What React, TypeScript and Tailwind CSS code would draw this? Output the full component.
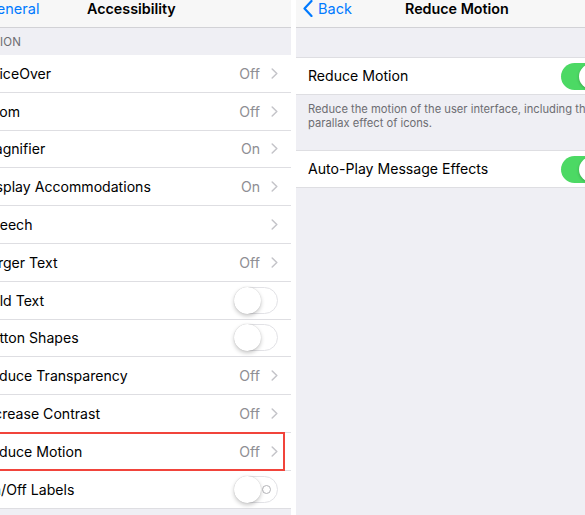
import React from "react";

const FONT = { fontFamily: "Inter, 'Noto Sans', 'Liberation Sans', sans-serif" };

function Chevron() {
  return (
    <svg width="7" height="11" viewBox="0 0 7 11" className="shrink-0">
      <polyline points="1.2,1 5.8,5.5 1.2,10" fill="none" stroke="#c4c4c9" strokeWidth="1.5" strokeLinecap="round" strokeLinejoin="round" />
    </svg>
  );
}

function Toggle({ on, labels }: { on?: boolean; labels?: boolean }) {
  if (on) {
    return (
      <div className="relative w-[44px] h-[27px] rounded-full bg-[#4cd964] shrink-0">
        <div className="absolute top-[1px] right-[1px] w-[25px] h-[25px] rounded-full bg-white shadow-[0_1px_3px_rgba(0,0,0,0.25)]" />
      </div>
    );
  }
  return (
    <div className="relative w-[44px] h-[27px] rounded-full border border-[#e2e2e6] bg-white shrink-0">
      {labels && (
        <div className="absolute top-[8px] right-[6px] w-[9px] h-[9px] rounded-full border border-[#b4b4b8]" />
      )}
      <div className="absolute top-[-1px] left-[-1px] w-[27px] h-[27px] rounded-full bg-white shadow-[0_2px_4px_rgba(0,0,0,0.22),0_0_1px_rgba(0,0,0,0.2)]" />
    </div>
  );
}

type Row = { label: string; value?: string; chevron?: boolean; toggle?: boolean; labels?: boolean; highlight?: boolean };

const rows: Row[] = [
  { label: "VoiceOver", value: "Off", chevron: true },
  { label: "Zoom", value: "Off", chevron: true },
  { label: "Magnifier", value: "On", chevron: true },
  { label: "Display Accommodations", value: "On", chevron: true },
  { label: "Speech", chevron: true },
  { label: "Larger Text", value: "Off", chevron: true },
  { label: "Bold Text", toggle: true },
  { label: "Button Shapes", toggle: true },
  { label: "Reduce Transparency", value: "Off", chevron: true },
  { label: "Increase Contrast", value: "Off", chevron: true },
  { label: "Reduce Motion", value: "Off", chevron: true, highlight: true },
  { label: "On/Off Labels", toggle: true, labels: true },
];

function LeftPanel() {
  return (
    <div className="w-[291px] h-[515px] overflow-hidden bg-[#efeff4] shrink-0">
      <div className="w-[322px] ml-[-31px]">
        <div className="h-[28px] bg-[#f7f7f7] border-b border-[#d2d2d6] flex items-start">
          <div className="w-[100px] flex items-start pl-[17px] text-[14.5px] leading-[18px] text-[#007aff]">
            <span>General</span>
          </div>
          <div className="ml-[18px] text-[14.3px] leading-[18px] font-semibold text-black">Accessibility</div>
        </div>
        <div className="h-[27px] flex items-center pt-[3px] pl-[12px] text-[11.5px] text-[#6d6d72] tracking-[0.2px]">VISION</div>
        <div className="bg-white">
          {rows.map((r, i) => (
            <div key={i} className="relative h-[37.8px] flex items-center pl-[13px] pr-[13px] border-b border-[#dedee2]">
              <span className="flex-1 text-[14.1px] text-black">{r.label}</span>
              {r.value && <span className="text-[14.1px] text-[#8e8e93] mr-[11px]">{r.value}</span>}
              {r.chevron && <Chevron />}
              {r.toggle && <Toggle labels={r.labels} />}
              {r.highlight && (
                <div className="absolute top-[-1px] bottom-[-1px] left-[20px] right-[6px] border-2 border-[#f1443b]" />
              )}
            </div>
          ))}
        </div>
      </div>
    </div>
  );
}

function RightPanel() {
  return (
    <div className="w-[289px] h-[515px] overflow-hidden bg-[#efeff4] shrink-0">
      <div className="w-[322px]">
        <div className="h-[28px] bg-[#f7f7f7] border-b border-[#d2d2d6] flex items-start">
          <div className="w-[109px] flex items-start pl-[7px] text-[14.5px] leading-[18px] text-[#007aff]">
            <svg width="10" height="17" viewBox="0 0 10 17" className="mr-[5px]">
              <polyline points="8.5,1 1.5,8.5 8.5,16" fill="none" stroke="#007aff" strokeWidth="2.2" strokeLinecap="round" strokeLinejoin="round" />
            </svg>
            <span>Back</span>
          </div>
          <div className="text-[14.3px] leading-[18px] font-semibold text-black">Reduce Motion</div>
        </div>
        <div className="h-[29px]" />
        <div className="bg-white border-y border-[#dedee2] h-[38px] flex items-center pl-[12px] pr-[13px]">
          <span className="flex-1 text-[14.1px] text-black">Reduce Motion</span>
          <Toggle on />
        </div>
        <div className="h-[55px] pl-[12px] pt-[7px] text-[11.2px] leading-[14px] text-[#6d6d72] whitespace-nowrap">
          <div>Reduce the motion of the user interface, including the</div>
          <div>parallax effect of icons.</div>
        </div>
        <div className="bg-white border-y border-[#dedee2] h-[38px] flex items-center pl-[12px] pr-[13px]">
          <span className="flex-1 text-[14.1px] text-black">Auto-Play Message Effects</span>
          <Toggle on />
        </div>
      </div>
    </div>
  );
}

export default function App() {
  return (
    <div className="w-[585px] h-[515px] bg-white flex gap-[5px] overflow-hidden" style={FONT}>
      <LeftPanel />
      <RightPanel />
    </div>
  );
}
